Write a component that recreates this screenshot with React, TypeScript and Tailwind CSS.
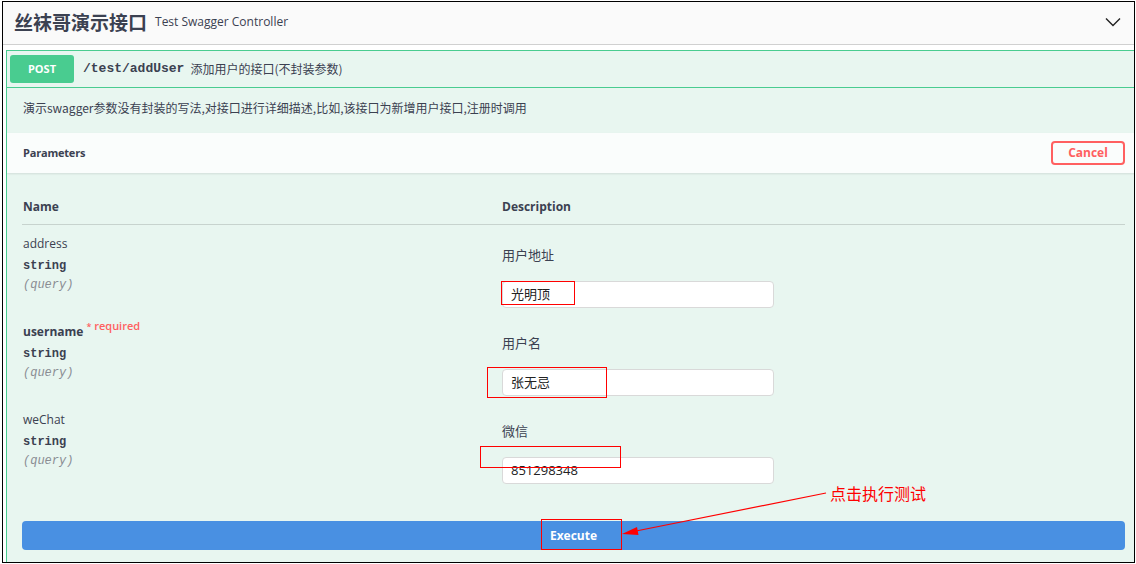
import React from "react";

const sans = "font-['Open_Sans','Noto_Sans_CJK_SC',sans-serif]";

type Param = {
  name: string;
  required?: boolean;
  desc: string;
  value: string;
};

const params: Param[] = [
  { name: "address", desc: "用户地址", value: "光明顶" },
  { name: "username", required: true, desc: "用户名", value: "张无忌" },
  { name: "weChat", desc: "微信", value: "851298348" },
];

function ParamRow({ p }: { p: Param }) {
  return (
    <div className="flex h-[88px]">
      <div className="w-[480px] shrink-0 pl-[1px] pt-[10px]">
        <div className="flex items-start text-[12px] leading-[18px]">
          <span className={p.required ? "font-bold text-[#3b4151]" : "text-[#3b4151]"}>{p.name}</span>
          {p.required && (
            <span className="ml-[3px] -mt-[4px] text-[11px] font-semibold leading-[14px] text-[#ff6060]">
              <span className="text-[9px]">*</span>&nbsp;required
            </span>
          )}
        </div>
        <div className="mt-[4px] font-['Liberation_Mono',monospace] text-[12px] font-bold leading-[18px] text-[#3b4151]">
          string
        </div>
        <div className="mt-[1px] font-['Liberation_Mono',monospace] text-[12px] italic leading-[18px] text-[#8a8d94]">
          (query)
        </div>
      </div>
      <div className="pt-[21px]">
        <div className="text-[13px] leading-[18px] text-[#3b4151]">{p.desc}</div>
        <div className="mt-[17px] flex h-[27px] w-[272px] items-center rounded-[4px] border border-[#d9d9d9] bg-white pl-[8px] pt-[1px] text-[13px] text-[#222]">
          {p.value}
        </div>
      </div>
    </div>
  );
}

export default function App() {
  return (
    <div className={`relative h-[564px] w-[1136px] bg-white pl-[2px] pt-[1px] ${sans} text-[#3b4151]`}>
      <div className="h-[562px] w-[1133px] overflow-hidden border border-black bg-white">
        {/* Tag header */}
        <div className="flex h-[43px] items-center justify-between border-b border-[#d0d0d0] bg-[#fafafa] pb-[2px] pl-[11px] pr-[13px]">
          <div className="flex items-center">
            <span className="font-['Noto_Sans_CJK_SC',sans-serif] text-[19px] font-bold leading-[24px] text-[#3b4151]">
              丝袜哥演示接口
            </span>
            <span className="ml-[8px] text-[12px] leading-[16px] text-[#3b4151]">Test Swagger Controller</span>
          </div>
          <svg width="16" height="10" viewBox="0 0 16 10">
            <polyline points="1,1.5 8,8.5 15,1.5" fill="none" stroke="#222" strokeWidth="1.4" />
          </svg>
        </div>

        {/* Operation block */}
        <div className="ml-[3px] mt-[5px] w-[1134px] border border-[#49cc90] bg-[#e8f6f0]">
          {/* summary */}
          <div className="flex h-[37px] items-center border-b border-[#49cc90] px-[3px]">
            <div className="flex h-[28px] w-[64px] items-center justify-center rounded-[3px] bg-[#49cc90] text-[11px] font-bold text-white">
              POST
            </div>
            <span className="ml-[9px] font-['Liberation_Mono',monospace] text-[13px] font-bold text-[#3b4151]">
              /test/addUser
            </span>
            <span className="ml-[6px] font-['Noto_Sans_CJK_SC',sans-serif] text-[12px] text-[#3b4151]">
              添加用户的接口(不封装参数)
            </span>
          </div>

          {/* description */}
          <div className="flex h-[45px] items-center pb-[5px] pl-[16px] font-['Noto_Sans_CJK_SC',sans-serif] text-[12px] text-[#3b4151]">
            演示swagger参数没有封装的写法,对接口进行详细描述,比如,该接口为新增用户接口,注册时调用
          </div>

          {/* parameters header */}
          <div className="flex h-[40px] items-center justify-between bg-white/80 pl-[16px] pr-[14px] shadow-[0_1px_2px_rgba(0,0,0,0.1)]">
            <span className="text-[11px] font-bold tracking-[-0.2px] text-[#3b4151]">Parameters</span>
            <div className="flex h-[24px] w-[74px] items-center justify-center rounded-[4px] border-2 border-[#ff6060] text-[12px] font-bold text-[#ff6060]">
              Cancel
            </div>
          </div>

          {/* table */}
          <div className="pl-[15px] pr-[14px]">
            <div className="flex border-b border-[#c7d3ce] pb-[9px] pt-[26px] text-[12px] font-bold leading-[16px]">
              <div className="w-[480px] shrink-0 pl-[1px]">Name</div>
              <div>Description</div>
            </div>
            {params.map((p) => (
              <ParamRow key={p.name} p={p} />
            ))}
            <div className="mt-[32px] flex h-[29px] items-center justify-center rounded-[4px] bg-[#4990e2] text-[12px] font-bold text-white">
              Execute
            </div>
            <div className="h-[20px]" />
          </div>
        </div>
      </div>

      {/* annotations */}
      <div className="pointer-events-none absolute left-[501px] top-[281px] h-[24px] w-[74px] border border-[#ff0000]" />
      <div className="pointer-events-none absolute left-[487px] top-[367px] h-[31px] w-[120px] border border-[#ff0000]" />
      <div className="pointer-events-none absolute left-[480px] top-[446px] h-[22px] w-[141px] border border-[#ff0000]" />
      <div className="pointer-events-none absolute left-[541px] top-[519px] h-[31px] w-[81px] border border-[#ff0000]" />
      <div className="pointer-events-none absolute left-[830px] top-[482px] font-['Noto_Sans_CJK_SC',sans-serif] text-[16px] leading-[22px] text-[#ff0000]">
        点击执行测试
      </div>
      <svg className="pointer-events-none absolute left-0 top-0" width="1136" height="564">
        <line x1="826" y1="493" x2="636" y2="531" stroke="#ff0000" strokeWidth="1.2" />
        <polygon points="622,534 637,527 638.5,535" fill="#ff0000" />
      </svg>
    </div>
  );
}
